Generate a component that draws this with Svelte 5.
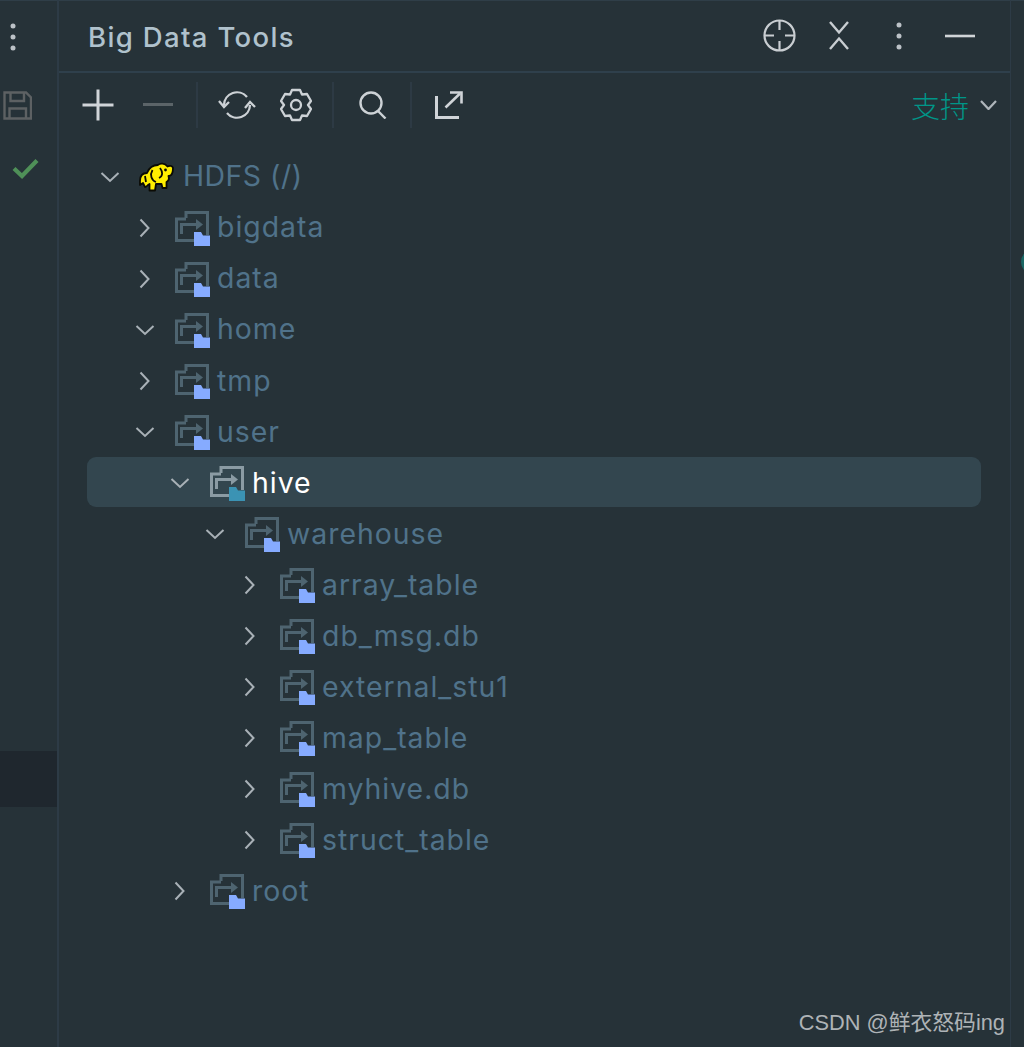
<script>
  const rows = [
    { name: 'bigdata', depth: 1, open: false },
    { name: 'data', depth: 1, open: false },
    { name: 'home', depth: 1, open: true },
    { name: 'tmp', depth: 1, open: false },
    { name: 'user', depth: 1, open: true },
    { name: 'hive', depth: 2, open: true, selected: true },
    { name: 'warehouse', depth: 3, open: true },
    { name: 'array_table', depth: 4, open: false },
    { name: 'db_msg.db', depth: 4, open: false },
    { name: 'external_stu1', depth: 4, open: false },
    { name: 'map_table', depth: 4, open: false },
    { name: 'myhive.db', depth: 4, open: false },
    { name: 'struct_table', depth: 4, open: false },
    { name: 'root', depth: 2, open: false }
  ];
</script>

{#snippet chevron(open)}
  <svg class="chev" width="24" height="24" viewBox="0 0 24 24" fill="none" stroke="#a9b1b7" stroke-width="2">
    {#if open}<path d="M3.5 8 L12 16 L20.5 8" />{:else}<path d="M7.5 3.5 L15.5 12 L7.5 20.5" />{/if}
  </svg>
{/snippet}

{#snippet hdfsFolder(selected)}
  <svg class="folder" width="35" height="36" viewBox="0 0 35 36" fill="none">
    <g stroke={selected ? '#8b9ba4' : '#4e6470'} stroke-width="3">
      <path d="M11 7 V1.5 H32.5 V24" />
      <path d="M11 8 H1.5 V29.5 H19" />
      <path d="M6.5 23 V13.5 H23" />
    </g>
    <path d="M21 8 L28 13.5 L21 19 Z" fill={selected ? '#8b9ba4' : '#4e6470'} />
    <path d="M19 21 H26 L28 24.5 H35 V35 H19 Z" fill={selected ? '#3b93b4' : '#86abff'} />
  </svg>
{/snippet}

<div class="frame">
  <aside class="rail">
    <div class="rail-top">
      <svg width="8" height="30" viewBox="0 0 8 30" fill="#bcc2c7"><circle cx="4" cy="4" r="2.5" /><circle cx="4" cy="15" r="2.5" /><circle cx="4" cy="26" r="2.5" /></svg>
    </div>
    <div class="rail-tools">
      <svg width="29" height="29" viewBox="0 0 29 29" fill="none" stroke="#5d6163" stroke-width="2.4">
        <path d="M1.5 1.5 H23 L28 6.5 V27.5 H1.5 Z" />
        <path d="M7.5 1.5 V10 H21 V1.5" />
        <path d="M6.5 27.5 V17.5 H23 V27.5" />
      </svg>
      <svg class="check" width="27" height="21" viewBox="0 0 27 21" fill="none" stroke="#4f9058" stroke-width="4.2">
        <path d="M2 10.5 L10 18 L25 2.5" />
      </svg>
    </div>
    <div class="rail-active"></div>
  </aside>

  <main class="panel">
    <header class="title-bar">
      <h1>Big Data Tools</h1>
      <div class="title-actions">
        <svg width="33" height="33" viewBox="0 0 33 33" fill="none" stroke="#c9ced2" stroke-width="2.2">
          <circle cx="16.5" cy="16.5" r="15" />
          <path d="M16.5 1.5 V11 M16.5 22 V31.5 M1.5 16.5 H11 M22 16.5 H31.5" />
        </svg>
        <svg width="20" height="29" viewBox="0 0 20 29" fill="none" stroke="#c9ced2" stroke-width="2.4">
          <path d="M1 1 L10 11.5 L19 1 M1 28 L10 17.5 L19 28" />
        </svg>
        <svg width="8" height="30" viewBox="0 0 8 30" fill="#bcc2c7"><circle cx="4" cy="4" r="2.5" /><circle cx="4" cy="15" r="2.5" /><circle cx="4" cy="26" r="2.5" /></svg>
        <svg width="30" height="4" viewBox="0 0 30 4" fill="#d0d4d7"><rect width="30" height="2.6" y="0.7" /></svg>
      </div>
    </header>

    <div class="toolbar">
      <svg class="t-plus" width="32" height="32" viewBox="0 0 32 32" fill="#d0d4d8"><rect x="14.5" y="0.5" width="3" height="31" /><rect x="0.5" y="14.5" width="31" height="3" /></svg>
      <svg class="t-minus" width="30" height="4" viewBox="0 0 30 4" fill="#5b6468"><rect width="30" height="3" /></svg>
      <span class="sep s1"></span>
      <svg class="t-sync" width="38" height="30" viewBox="0 0 38 30" fill="none" stroke="#cdd2d6" stroke-width="2.3">
        <path d="M6 15 A13 13 0 0 1 29 7" />
        <path d="M32 15 A13 13 0 0 1 9 23" />
        <path d="M1 11 L6 17 L11 12" />
        <path d="M27 18 L32 12 L37 17" />
      </svg>
      <svg class="t-gear" width="32" height="34" viewBox="0 0 32 34" fill="none" stroke="#cdd2d6" stroke-width="2.3">
        <path d="M12 2 H20 L22 6.5 L27 6 L31 13 L28 17 L31 21 L27 28 L22 27.5 L20 32 H12 L10 27.5 L5 28 L1 21 L4 17 L1 13 L5 6 L10 6.5 Z" stroke-linejoin="round" />
        <circle cx="16" cy="17" r="5" />
      </svg>
      <span class="sep s2"></span>
      <svg class="t-search" width="28" height="28" viewBox="0 0 28 28" fill="none" stroke="#cdd2d6" stroke-width="2.4">
        <circle cx="12" cy="12" r="10.5" />
        <path d="M18.5 19.5 L26.5 27.5" />
      </svg>
      <span class="sep s3"></span>
      <svg class="t-open" width="28" height="28" viewBox="0 0 28 28" fill="none" stroke="#d0d4d8" stroke-width="2.6">
        <path d="M1.5 5 V26.5 H24" stroke-width="3" />
        <path d="M10.5 16.5 L25 2.5" />
        <path d="M15 1.5 H26.5 V12.5" />
      </svg>
      <div class="support">
        <span>支持</span>
        <svg width="17" height="10" viewBox="0 0 17 10" fill="none" stroke="#afb6bb" stroke-width="2.2"><path d="M1 1 L8.5 9 L16 1" /></svg>
      </div>
    </div>

    <ul class="tree">
      <li class="row root-row">
        {@render chevron(true)}
        <svg class="elephant" width="35" height="30" viewBox="0 0 35 30">
          <path d="M1 19 C1 13 4 11 8 11 C10 6 14 3 19 3 C21 0.8 26 1 28.5 4.5 C30.5 3.5 33.5 3.5 34 6 C34 10.5 32.5 14 29.5 14 C30.5 17 29.5 19 27.5 20 L27.5 26 H23.5 L22.5 22 H17 L16 28.5 H10.5 L10.5 22 C8 23 8 25 6 25 L4 21 L1 23 Z" fill="#ffee00" stroke="#0b0b05" stroke-width="1.8" stroke-linejoin="round" />
          <path d="M13.5 8 C10.5 13 12.5 18.5 17 20 M21 6 C24 10 24 14 20 16 M6 14 L7 20" fill="none" stroke="#0b0b05" stroke-width="1.8" />
          <circle cx="26.5" cy="8" r="1.4" fill="#0b0b05" />
        </svg>
        <span class="hdfs">HDFS (/)</span>
      </li>
      {#each rows as r}
        <li class="row" class:selected={r.selected} style="padding-left: {r.depth * 35}px">
          {@render chevron(r.open)}
          {@render hdfsFolder(r.selected)}
          <span class="name">{r.name}</span>
        </li>
      {/each}
    </ul>
    <div class="watermark">CSDN @鲜衣怒码ing</div>
  </main>

  <aside class="right">
    <span class="knob"></span>
  </aside>
</div>

<style>
  :global(body) {
    margin: 0;
    background: #263238;
  }
  .frame {
    display: grid;
    grid-template-columns: 57px 954px 13px;
    height: 1047px;
    background: #263238;
    overflow: hidden;
    font-family: Inter, "Noto Sans CJK SC", sans-serif;
    box-shadow: inset 0 1px 0 #2f3e48;
  }
  .rail {
    display: flex;
    flex-direction: column;
    position: relative;
  }
  .rail-top {
    height: 71px;
    box-sizing: border-box;
    padding: 22px 0 0 9px;
  }
  .rail-top svg, .rail-tools svg {
    display: block;
  }
  .rail-tools {
    padding: 20px 0 0 3px;
  }
  .check {
    margin: 38px 0 0 9px;
  }
  .rail-active {
    position: absolute;
    top: 751px;
    left: 0;
    right: 0;
    height: 56px;
    background: #1f272e;
  }
  .panel {
    border-left: 2px solid #2d3b46;
    border-right: 1px solid #2d3b46;
    display: flex;
    flex-direction: column;
    position: relative;
    min-width: 0;
  }
  .title-bar {
    height: 71px;
    box-sizing: content-box;
    border-bottom: 2px solid #2f404c;
    display: flex;
    align-items: center;
    justify-content: space-between;
    padding: 0 35px 0 29px;
  }
  h1 {
    margin: 3px 0 0;
    font-size: 27.5px;
    font-weight: 500;
    letter-spacing: 1.35px;
    color: #b0c2cd;
  }
  .title-actions {
    display: flex;
    align-items: center;
  }
  .title-actions svg:nth-child(2) { margin-left: 33px; }
  .title-actions svg:nth-child(3) { margin-left: 46px; }
  .title-actions svg:nth-child(4) { margin-left: 42px; }
  .toolbar {
    height: 63px;
    display: flex;
    align-items: center;
    padding: 0 13px 0 23px;
    flex-shrink: 0;
  }
  .toolbar svg { flex-shrink: 0; }
  .t-minus { margin-left: 29px; }
  .sep {
    width: 2px;
    height: 46px;
    background: #2d3a44;
    flex-shrink: 0;
  }
  .s1 { margin-left: 23px; }
  .t-sync { margin-left: 20px; }
  .t-gear { margin-left: 24px; }
  .s2 { margin-left: 20px; }
  .t-search { margin-left: 25px; }
  .s3 { margin-left: 23px; }
  .t-open { margin-left: 23px; }
  .support {
    margin-left: auto;
    display: flex;
    align-items: center;
    gap: 11px;
    color: #009688;
    font-size: 29px;
    font-weight: 300;
  }
  .tree {
    list-style: none;
    margin: 15px 0 0;
    padding: 0;
  }
  .row {
    height: 51.05px;
    display: flex;
    align-items: center;
    position: relative;
    font-size: 28.4px;
    color: #50728a;
    letter-spacing: 1px;
    box-sizing: border-box;
  }
  .chev {
    margin-left: 39px;
    margin-right: 18px;
  }
  .root-row .chev { margin-right: 17px; }
  .row.selected {
    color: #fff;
    z-index: 0;
  }
  .row.selected::before {
    content: "";
    position: absolute;
    left: 28px;
    right: 29px;
    top: 0;
    height: 50px;
    background: #33464f;
    border-radius: 9px;
    z-index: -1;
  }
  .elephant { margin-right: 9px; }
  .hdfs { letter-spacing: 0.5px; }
  .folder { margin-right: 7px; margin-top: 2px; }
  .name, .hdfs { line-height: 1; }
  .watermark {
    position: absolute;
    top: 1005px;
    right: 5px;
    font-family: "Liberation Sans", "Noto Sans CJK SC", sans-serif;
    font-size: 21.8px;
    color: #aeb3b6;
    white-space: nowrap;
  }
  .right {
    position: relative;
  }
  .knob {
    position: absolute;
    left: 10px;
    top: 250px;
    width: 22px;
    height: 24px;
    border-radius: 50%;
    background: #1a6764;
  }
</style>
